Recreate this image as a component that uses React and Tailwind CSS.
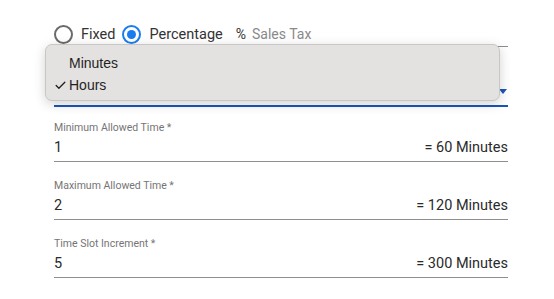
import { Check } from 'lucide-react';

function Radio({ checked, label }) {
  return (
    <label className="flex items-center">
      <span
        className={
          checked
            ? 'flex h-[19px] w-[19px] items-center justify-center rounded-full border-2 border-[#1b7cf0]'
            : 'h-[19px] w-[19px] rounded-full border-2 border-[#6b6b6b]'
        }
      >
        {checked && <span className="h-[9px] w-[9px] rounded-full bg-[#1b7cf0]" />}
      </span>
      <span className="ml-[8px] text-[14.5px] text-[#333]">{label}</span>
    </label>
  );
}

function TimeField({ label, value, minutes, first }) {
  return (
    <div className={`border-b border-[#8e8e8e] pb-[3px] ${first ? 'pt-[14px]' : 'pt-[17px]'}`}>
      <div className="text-[10.5px] leading-[14px] text-[#757575]">{label}</div>
      <div className="mt-[3px] flex justify-between text-[14.5px] leading-[20px] text-[#2a2a2a]">
        <span>{value}</span>
        <span>= {minutes} Minutes</span>
      </div>
    </div>
  );
}

export default function App() {
  return (
    <div className="relative h-[299px] w-[554px] bg-white font-['Roboto',sans-serif]">
      <div className="ml-[54px] w-[454px] pt-[22px]">
        <div className="flex h-[25px] items-center">
          <div className="flex items-center gap-[7px]">
            <Radio label="Fixed" />
            <Radio checked label="Percentage" />
          </div>
          <div className="ml-[13px] flex h-[25px] flex-1 items-center border-b border-[#8e8e8e]">
            <span className="text-[14px] text-[#333]">%</span>
            <span className="ml-[6px] text-[14px] text-[#8a8a8a]">Sales Tax</span>
          </div>
        </div>

        <div className="relative h-[60px] border-b-2 border-[#1a56b8]">
          <svg className="absolute right-[1px] top-[42px]" width="8" height="5" viewBox="0 0 8 5">
            <path d="M0 0h8L4 5z" fill="#1a56b8" />
          </svg>
        </div>

        <TimeField first label="Minimum Allowed Time *" value="1" minutes="60" />
        <TimeField label="Maximum Allowed Time *" value="2" minutes="120" />
        <TimeField label="Time Slot Increment *" value="5" minutes="300" />
      </div>

      <div className="absolute left-[45px] top-[44px] h-[57px] w-[455px] rounded-[7px] border border-[#c9c7c5] bg-[#e4e2e0] pt-[7px] font-['Liberation_Sans',sans-serif] text-[14px] text-[#1f1f1f] shadow-[0_3px_12px_rgba(0,0,0,0.18)]">
        <div className="flex h-[22px] items-center pl-[23px]">Minutes</div>
        <div className="flex h-[23px] items-center">
          <Check size={13} strokeWidth={2.4} className="ml-[8px] mr-[2px] text-[#1f1f1f]" />
          <span>Hours</span>
        </div>
      </div>
    </div>
  );
}
